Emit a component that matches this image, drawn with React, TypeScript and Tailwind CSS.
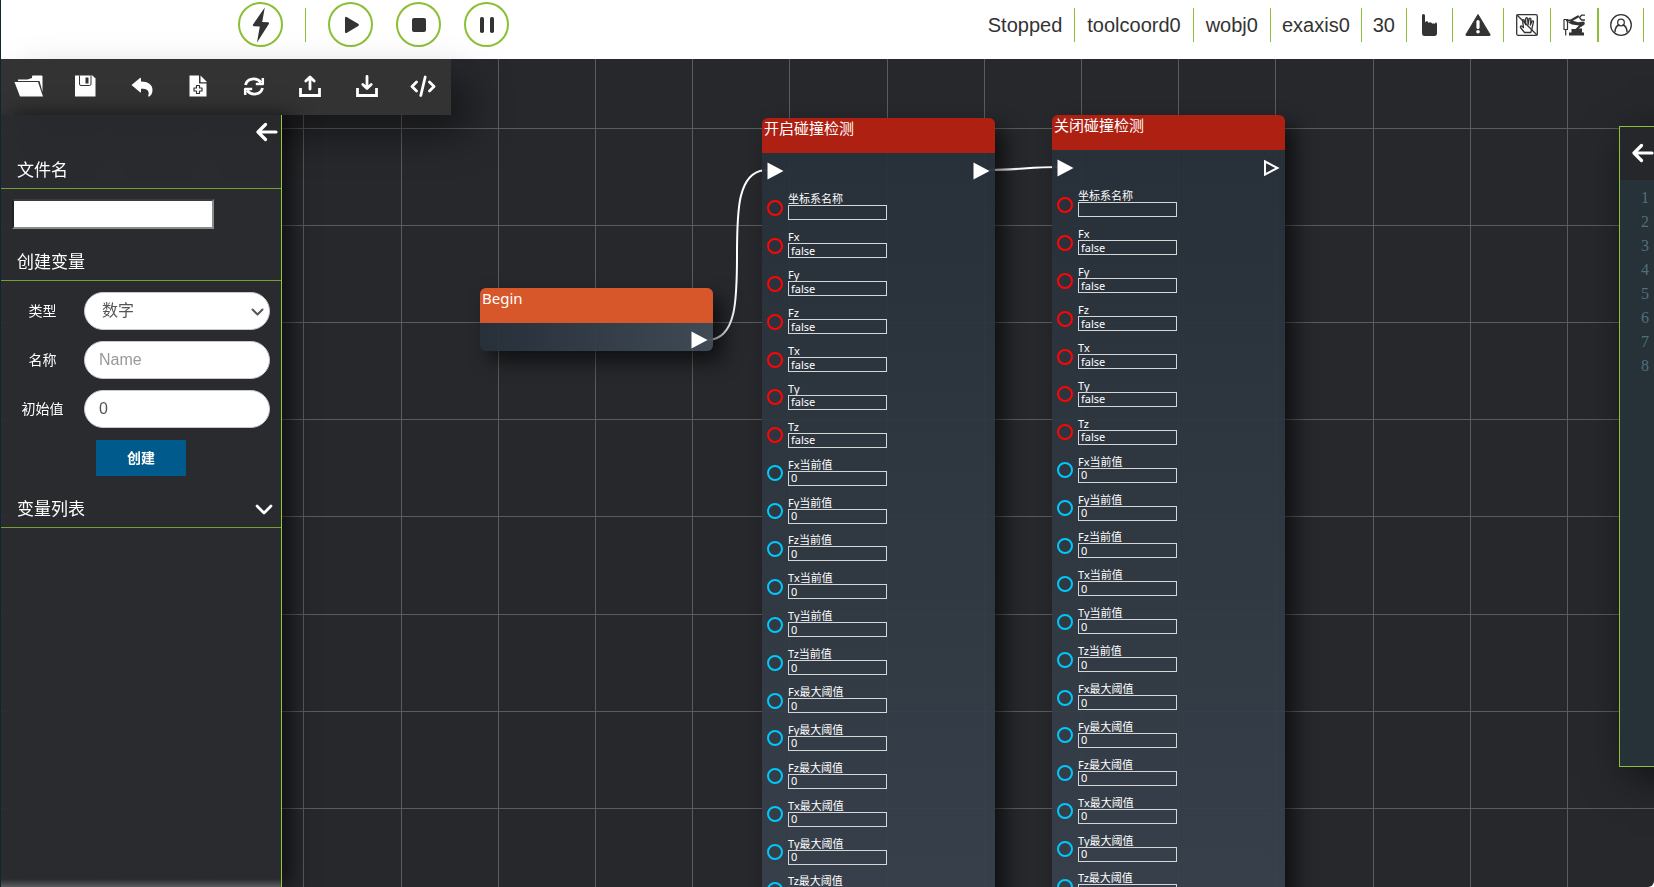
import React from "react";

type Kind = "bool" | "number";
type Param = { label: string; value: string; kind: Kind };

const axes = ["Fx", "Fy", "Fz", "Tx", "Ty", "Tz"];

const params: Param[] = [
  { label: "坐标系名称", value: "", kind: "bool" },
  ...axes.map((a): Param => ({ label: a, value: "false", kind: "bool" })),
  ...axes.map((a): Param => ({ label: a + "当前值", value: "0", kind: "number" })),
  ...axes.map((a): Param => ({ label: a + "最大阈值", value: "0", kind: "number" })),
];

const svgProps = { fill: "none", stroke: "currentColor", strokeLinecap: "round", strokeLinejoin: "round" } as const;

/* Toolbar icons */

const FolderIcon = () => (
  <svg width="30" height="22" viewBox="0 0 30 22" fill="#fff">
    <path d="M4 6V4.5h9.5l4.5-1.500V1.500Q18 0.500 19 0.500h8.500q1 0 1 1V17L25.500 6z" />
    <path d="M0.500 7h23.500l5 14.500H6z" />
  </svg>
);
const SaveIcon = () => (
  <svg width="22" height="22" viewBox="0 0 22 22">
    <path d="M1 0.500h17.500l3 3V21.500H1z" fill="#fff" />
    <path d="M5.500 0.500v8.500q0 1.500 1.500 1.500h8.500q1.500 0 1.500-1.500V0.500" fill="none" stroke="#333" strokeWidth="1" />
    <path d="M11.500 2.500h3v6h-3z" fill="#333" />
  </svg>
);
const UndoIcon = () => (
  <svg width="22" height="22" viewBox="0 0 22 22" fill="#fff">
    <path d="M0.500 10 9 3q1-.5 1 .7V6.500c7 0 11.500 3 11.500 8.500 0 3.500-1.500 5.500-3.200 6.500-.8.4-1.300 0-1-.9 1.500-5-1.300-6.800-7.300-6.800v2.900q0 1.200-1 .6z" />
  </svg>
);
const FileAddIcon = () => (
  <svg width="22" height="22" viewBox="0 0 22 22">
    <path d="M2.500 0.500h9.500v8h7.500v13h-17z" fill="#fff" />
    <path d="M13.500 0.500 19.500 6.500v.7h-6z" fill="#fff" />
    <path d="M9.500 10.500h3v2.500h2.500v3h-2.500v2.500h-3V16H7v-3h2.500z" fill="none" stroke="#333" strokeWidth="1.200" strokeLinejoin="round" />
  </svg>
);
const RefreshIcon = () => (
  <svg width="22" height="22" viewBox="0 0 22 22" {...svgProps} strokeLinecap="butt" strokeWidth="2.800">
    <path d="M2.500 10C4 3.500 13 1.500 18 7.500" />
    <path d="M19.500 13C18 19.500 9 21.500 4 15.500" />
    <path d="M19.800 3v6h-7" strokeWidth="2.500" />
    <path d="M2.200 20v-6h7" strokeWidth="2.500" />
  </svg>
);
const UploadIcon = () => (
  <svg width="22" height="22" viewBox="0 0 22 22" {...svgProps} strokeWidth="2.800">
    <path d="M1.500 13v7.500h19V13" strokeLinecap="butt" strokeLinejoin="miter" />
    <path d="M11 14V2.500M6.800 6 11 2l4.200 4" />
  </svg>
);
const DownloadIcon = () => (
  <svg width="22" height="22" viewBox="0 0 22 22" {...svgProps} strokeWidth="2.800">
    <path d="M1.500 13v7.500h19V13" strokeLinecap="butt" strokeLinejoin="miter" />
    <path d="M11 1.500v11M6.800 9.500 11 13.500l4.200-4" />
  </svg>
);
const CodeIcon = () => (
  <svg width="26" height="22" viewBox="0 0 26 22" {...svgProps} strokeWidth="2.800">
    <path d="M6.500 7 2 11.500l4.500 4.500M19.500 7l4.500 4.500-4.500 4.500M15.200 2l-4.400 18.500" />
  </svg>
);
const ArrowLeftIcon = () => (
  <svg width="22" height="20" viewBox="0 0 22 20" {...svgProps} strokeWidth="3.200">
    <path d="M9.500 2.500 2 10l7.500 7.500M2.500 10h17.500" />
  </svg>
);

const tools = [
  { name: "打开", icon: <FolderIcon /> },
  { name: "保存", icon: <SaveIcon /> },
  { name: "撤销", icon: <UndoIcon /> },
  { name: "新建", icon: <FileAddIcon /> },
  { name: "刷新", icon: <RefreshIcon /> },
  { name: "导出", icon: <UploadIcon /> },
  { name: "导入", icon: <DownloadIcon /> },
  { name: "代码", icon: <CodeIcon /> },
];

/* Header */

function RoundButton({ label, children }: { label: string; children: React.ReactNode }) {
  return (
    <button
      type="button"
      aria-label={label}
      className="flex size-[45px] items-center justify-center rounded-full border-2 border-[#8bbf35] bg-white"
    >
      {children}
    </button>
  );
}

function Header() {
  const icon = "flex h-[34px] items-center border-l border-[#8bbf35] px-3";
  return (
    <header className="flex h-[59px] shrink-0 items-start justify-between bg-white text-[#333]">
      <div className="flex items-center gap-[22px] pt-[2px] pl-[237px]">
        <RoundButton label="使能">
          <svg width="18" height="36" viewBox="0 0 18 36" fill="#333">
            <path d="M12.800 0.500 1 17.500q-.6 1.500.8 1.700l6 .3L5 35.500 16.800 17q.8-1.400-.8-1.700l-5.800-.3z" />
          </svg>
        </RoundButton>
        <div className="h-[34px] w-px bg-[#8bbf35]" />
        <div className="flex gap-[23px]">
          <RoundButton label="运行">
            <svg width="18" height="18" viewBox="0 0 18 18" fill="#333">
              <path d="M3 2.200Q3 0.200 5 1.200L16.200 7.700q1.800 1.200 0 2.400L5 16.800q-2 1-2-1z" />
            </svg>
          </RoundButton>
          <RoundButton label="停止">
            <svg width="16" height="16" viewBox="0 0 16 16" fill="#333">
              <rect x="1" y="1" width="14" height="14" rx="2" />
            </svg>
          </RoundButton>
          <RoundButton label="暂停">
            <svg width="16" height="18" viewBox="0 0 16 18" fill="#333">
              <rect x="1" y="1" width="4" height="16" rx="1.700" />
              <rect x="11" y="1" width="4" height="16" rx="1.700" />
            </svg>
          </RoundButton>
        </div>
      </div>
      <div className="flex items-center pt-[8px] pr-[10px] text-xl leading-[34px]">
        <span className="px-3">Stopped</span>
        <span className="border-l border-[#8bbf35] px-3">toolcoord0</span>
        <span className="border-l border-[#8bbf35] px-3">wobj0</span>
        <span className="border-l border-[#8bbf35] px-[11px]">exaxis0</span>
        <span className="border-l border-[#8bbf35] px-[11px]">30</span>
        <span className={icon}>
          <svg width="21" height="24" viewBox="0 0 21 24" fill="#333">
            <path d="M3 2.500Q3 1 4.500 1T6 2.500V9.500Q7 7.500 9 8.500l.5 1.500q1.500-1.500 3.300 0l.3.800q1.600-1.400 2.900.2l.4-1.500q1.600-.5 1.600 1.500V20q0 3-2.500 3H5.500Q3 23 3 20z" />
          </svg>
        </span>
        <span className={icon}>
          <svg width="26" height="24" viewBox="0 0 26 24">
            <path d="M13 1.500 25 21.500q.5 1-.6 1H1.600q-1.100 0-.6-1z" fill="#333" stroke="#333" strokeLinejoin="round" />
            <path d="M13 8.500v6" stroke="#fff" strokeWidth="3.200" strokeLinecap="round" />
            <circle cx="13" cy="18.700" r="1.800" fill="#fff" />
          </svg>
        </span>
        <span className={icon}>
          <svg width="22" height="22" viewBox="0 0 22 22" {...svgProps} strokeWidth="1.300">
            <rect x=".7" y=".7" width="20.600" height="20.600" rx="1.500" />
            <path d="M1 1 21 21" />
            <path d="M8.500 18.500 4.500 13.500q-.5-1.700 1-1.500l2 1.500L6.500 6.500q.4-1.600 1.700-.4l1.500 4.600V4.500q.9-1.500 1.900 0l.5 6 1-5.700q1.200-1.200 1.800.3l-.5 6 1.600-4q1.400-.8 1.500.8L15.800 15l-1 3.500z" />
          </svg>
        </span>
        <span className={icon}>
          <svg width="22" height="22" viewBox="0 0 22 22">
            <path d="M1 5.500h3.500v10H1zM2.700 15.500V21" {...svgProps} strokeWidth="1.200" />
            <path d="M4 6.500h4l7-4" {...svgProps} strokeWidth="2.200" />
            <path d="M21.500 1.200h-3l-2 2.300 2 2.500h3" {...svgProps} strokeWidth="1.300" />
            <path d="M5 8.500 9 6.500l6 1.800 6-.8q1.500 1.500 0 3.500l-5.500 3.500H19v4h2V21.500H6v-3h2.500V15h4l3.500-3.500L9 10.500z" fill="#333" />
          </svg>
        </span>
        <span className="flex h-[34px] items-center border-x border-l-2 border-[#8bbf35] px-[11px]">
          <svg width="22" height="22" viewBox="0 0 22 22" {...svgProps} strokeWidth="1.300">
            <circle cx="11" cy="11" r="10.300" />
            <circle cx="11" cy="8.500" r="3.300" />
            <path d="M5 17.500q.5-5.500 4-6.500M17 17.500q-.5-5.500-4-6.500" strokeWidth="1.500" />
          </svg>
        </span>
      </div>
    </header>
  );
}

/* Canvas */

function Port({ filled = true }: { filled?: boolean }) {
  return (
    <svg width="17" height="18" viewBox="0 0 17 18">
      {filled ? (
        <path d="M0.500 0.500 16.500 9 0.500 17.500z" fill="#fff" />
      ) : (
        <path d="M2 2.500 14.500 9 2 15.500z" fill="none" stroke="#fff" strokeWidth="2" />
      )}
    </svg>
  );
}

function BlockNode({ id, title, place, nextLinked }: { id: string; title: string; place: string; nextLinked: boolean }) {
  return (
    <section
      className={
        "absolute w-[233px] rounded-md bg-linear-to-b from-[#272f38]/95 to-[#38414c]/95 shadow-[10px_10px_20px_rgba(0,0,0,0.6)] " +
        place
      }
    >
      <h3 className="h-[35px] rounded-t-md bg-[#ae2012] px-[2px] text-[15px] leading-5">{title}</h3>
      <div className="flex h-[36px] items-center justify-between px-[5px]">
        <Port />
        <Port filled={nextLinked} />
      </div>
      <div className="flex h-[720px] flex-col">
        {params.map((p, i) => (
          <div key={p.label} className="flex flex-1 items-center gap-[5px] pl-[5px]">
            <span
              className={
                "size-4 rounded-full border-2 " + (p.kind === "bool" ? "border-[#ff0505]" : "border-[#00c8fa]")
              }
            />
            <div className="flex flex-col pb-[2px]">
              <label htmlFor={id + i} className="text-[11px] leading-3 whitespace-nowrap">
                {p.label}
              </label>
              <input
                id={id + i}
                defaultValue={p.value}
                className="h-[15px] w-[99px] border border-[#d4d6d8] bg-transparent px-[2px] pb-px text-[11px] leading-3 outline-none"
              />
            </div>
          </div>
        ))}
      </div>
    </section>
  );
}

function Canvas() {
  const columns = Array.from({ length: 30 }, (_, k) => Math.round(10.7 + 97.2 * k));
  const rows = Array.from({ length: 16 }, (_, k) => Math.round(69 + 97.1 * k));
  return (
    <div className="absolute inset-0 overflow-hidden rounded-br-md bg-[#27282c] font-['Noto_Sans','Noto_Sans_CJK_SC',sans-serif]">
      <svg className="absolute inset-0 size-full" shapeRendering="crispEdges">
        {columns.map((x) => (
          <rect key={x} x={x} y="0" width="1" height="100%" fill="#5a5b5b" />
        ))}
        {rows.map((y) => (
          <rect key={y} x="0" y={y} width="100%" height="1" fill="#5a5b5b" />
        ))}
      </svg>
      <svg className="absolute inset-0 size-full" fill="none" stroke="#fff" strokeWidth="2">
        <path d="M706 281C766 281 706 111 766 111" />
        <path d="M988 111C1015 111 1030 108 1057 108" />
      </svg>
      <section className="absolute top-[229px] left-[479px] w-[233px] rounded-md bg-linear-to-r from-[#27303a]/95 to-[#414c57]/95 shadow-[10px_10px_20px_rgba(0,0,0,0.6)]">
        <h3 className="h-[35px] rounded-t-md bg-[#d8572a] px-[2px] text-[15px] leading-5">Begin</h3>
        <div className="flex h-7 items-end justify-end pr-[5px] pb-[2px]">
          <Port />
        </div>
      </section>
      <BlockNode id="open" title="开启碰撞检测" place="top-[59px] left-[761px]" nextLinked />
      <BlockNode id="close" title="关闭碰撞检测" place="top-[56px] left-[1051px]" nextLinked={false} />
    </div>
  );
}

/* Side panel */

function Sidebar() {
  const field =
    "h-[38px] w-full rounded-full border border-[#c6c8d0] bg-white text-base text-[#555] outline-none placeholder:text-[#999]";
  const heading = "border-b border-[#759f32] px-4 text-[17px] leading-6 font-normal";
  return (
    <aside className="relative mt-14 flex w-[281px] shrink-0 flex-col border-r border-[#9bc53d] bg-[#2a2b2f]/85 shadow-[10px_0_20px_rgba(0,0,0,0.6)] backdrop-blur-sm">
      <div className="flex h-[34px] items-center justify-end pr-[3px]">
        <button type="button" aria-label="收起">
          <ArrowLeftIcon />
        </button>
      </div>
      <h2 className={heading}>
        <label htmlFor="file" className="block h-[39px] pt-[10px]">
          文件名
        </label>
      </h2>
      <div className="px-[11px] pt-[10px]">
        <input
          id="file"
          className="block h-[30px] w-[202px] border-2 border-t-[#3b3b3b] border-r-[#8a8a8a] border-b-[#8a8a8a] border-l-[#222] bg-white px-1 text-black outline-none"
        />
      </div>
      <h2 className={heading}>
        <span className="block h-[51px] pt-[22px]">创建变量</span>
      </h2>
      <form className="flex flex-col gap-[11px] pt-[11px] text-sm" onSubmit={(e) => e.preventDefault()}>
        <div className="flex items-center pr-[11px]">
          <label htmlFor="type" className="w-[83px] text-center">
            类型
          </label>
          <div className="relative flex-1">
            <select id="type" className={field + " appearance-none pl-[17px]"}>
              <option>数字</option>
            </select>
            <svg className="pointer-events-none absolute top-4 right-[6px]" width="13" height="9" viewBox="0 0 13 9" {...svgProps} stroke="#555" strokeWidth="2">
              <path d="M1.500 1.500 6.500 6.500l5-5" />
            </svg>
          </div>
        </div>
        <div className="flex items-center pr-[11px]">
          <label htmlFor="name" className="w-[83px] text-center">
            名称
          </label>
          <div className="flex flex-1">
            <input id="name" placeholder="Name" className={field + " px-[14px]"} />
          </div>
        </div>
        <div className="flex items-center pr-[11px]">
          <label htmlFor="initial" className="w-[83px] text-center">
            初始值
          </label>
          <div className="flex flex-1">
            <input id="initial" defaultValue="0" className={field + " px-[14px]"} />
          </div>
        </div>
        <button type="submit" className="mt-px ml-[95px] h-9 w-[90px] bg-[#005b8c] text-sm font-bold">
          创建
        </button>
      </form>
      <h2 className={heading}>
        <button type="button" className="flex h-[51px] w-[256px] items-center justify-between pt-[17px]">
          变量列表
          <svg width="18" height="12" viewBox="0 0 18 12" {...svgProps} strokeWidth="2.800">
            <path d="M2 2l7 7 7-7" />
          </svg>
        </button>
      </h2>
      <div className="mt-auto h-2 bg-linear-to-b from-transparent to-[#5b5c60]" />
    </aside>
  );
}

function CodePanel() {
  return (
    <aside className="relative mt-[67px] h-[641px] w-[35px] shrink-0 overflow-visible">
      <div className="flex h-full w-[480px] flex-col border border-[#8bbf35] bg-[#263238] shadow-[10px_10px_40px_rgba(0,0,0,0.6)]">
        <div className="flex h-[53px] items-center bg-[#25272a] pb-[2px] pl-3">
          <button type="button" aria-label="展开">
            <ArrowLeftIcon />
          </button>
        </div>
        <ol className="w-[29px] pt-[6px] text-right font-['Liberation_Serif',serif] text-base leading-6 text-[#546e7a]">
          {[1, 2, 3, 4, 5, 6, 7, 8].map((n) => (
            <li key={n}>{n}</li>
          ))}
        </ol>
      </div>
    </aside>
  );
}

export default function App() {
  return (
    <div className="flex h-screen flex-col overflow-hidden border-l border-[#10262f] bg-white font-['Liberation_Sans','Noto_Sans_CJK_SC',sans-serif] text-white">
      <Header />
      <main className="relative flex min-h-0 flex-1 [overflow-x:clip]">
        <Canvas />
        <nav className="absolute top-0 left-0 flex h-14 w-[450px] items-center bg-[#333] pb-[2px] shadow-[20px_20px_40px_-4px_rgba(0,0,0,0.5)]">
          {tools.map((t) => (
            <button key={t.name} type="button" aria-label={t.name} className="flex h-full flex-1 items-center justify-center">
              {t.icon}
            </button>
          ))}
        </nav>
        <Sidebar />
        <div className="flex-1" />
        <CodePanel />
      </main>
    </div>
  );
}
